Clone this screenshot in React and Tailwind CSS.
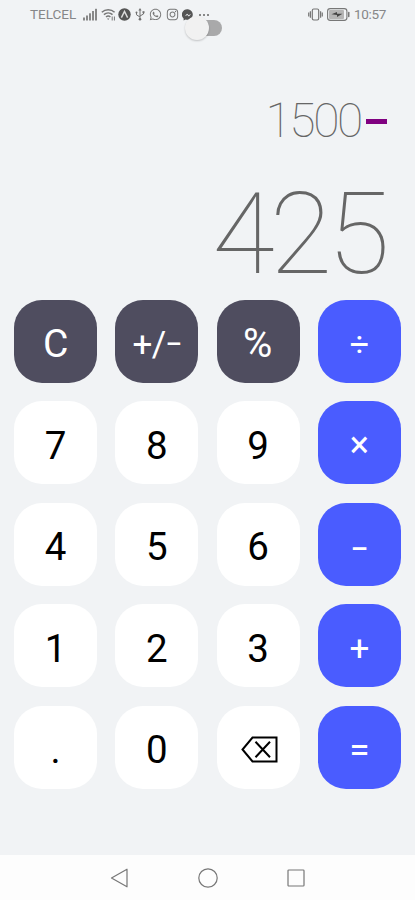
import React from "react";
import { FaWhatsapp, FaInstagram } from "react-icons/fa";

const keys = [
  { label: "C", tone: "dark", text: "text-[39px]" },
  { label: "+/-", name: "sign", tone: "dark" },
  { label: "%", tone: "dark", text: "text-[40px] tracking-[1px]" },
  { label: "÷", tone: "blue", text: "text-[34px] pb-px" },
  { label: "7" },
  { label: "8" },
  { label: "9" },
  { label: "×", tone: "blue", text: "text-[36px] pb-px" },
  { label: "4" },
  { label: "5" },
  { label: "6" },
  { label: "–", tone: "blue", text: "text-[27px] font-medium pt-[5px]" },
  { label: "1" },
  { label: "2" },
  { label: "3" },
  { label: "+", tone: "blue", text: "text-[35px] pb-px" },
  { label: "." },
  { label: "0" },
  { label: "", name: "delete" },
  { label: "=", tone: "blue", text: "text-[37px] pb-px" },
];

const tones = {
  dark: "bg-[#4f4d5f] text-white",
  blue: "bg-[#4a5cff] text-white",
  white: "bg-white text-black",
};

const SignalIcon = () => (
  <svg width="15" height="13" viewBox="0 0 15 13" fill="#888">
    <rect x="0" y="9.5" width="2" height="3" />
    <rect x="3" y="7.5" width="2" height="5" />
    <rect x="6" y="5.3" width="2" height="7.2" />
    <rect x="9" y="3" width="2" height="9.5" />
    <rect x="12" y="0.8" width="2" height="11.7" />
  </svg>
);

const WifiIcon = () => (
  <svg width="15" height="13" viewBox="0 0 15 13" fill="none" stroke="#777" strokeWidth="1.5">
    <path d="M0.8 4.2C4.4 0.8 10 0.8 13.6 4.2" />
    <path d="M2.9 6.6C5.4 4.3 9 4.3 11.5 6.6" />
    <path d="M5 9C6.4 7.8 8 7.8 9.4 9" />
    <path d="M6 10.6L7.2 12L8.4 10.6Z" fill="#777" stroke="none" />
    <path d="M11.2 8.5V12.5M13.4 8.5V12.5" strokeWidth="1" />
  </svg>
);

const ArrowBadgeIcon = () => (
  <svg width="13" height="13" viewBox="0 0 13 13">
    <circle cx="6.5" cy="6.5" r="6.2" fill="#555" />
    <path d="M3.4 9.6L6.5 3.4L9.6 9.6" fill="none" stroke="#ddd" strokeWidth="1.4" />
    <path d="M6.5 6.5V10" stroke="#555" strokeWidth="1.2" />
  </svg>
);

const UsbIcon = () => (
  <svg width="10" height="13" viewBox="0 0 10 13" fill="none" stroke="#707070" strokeWidth="1">
    <path d="M5 2V11M1.5 4.8V6.8L5 9M8.5 4V6L5 8" />
    <path d="M3.4 2.6L5 0L6.6 2.6Z" fill="#707070" stroke="none" />
    <circle cx="5" cy="11.3" r="1.3" fill="#707070" stroke="none" />
    <circle cx="1.5" cy="4.6" r="1" fill="#707070" stroke="none" />
    <rect x="7.5" y="3.2" width="2" height="2" fill="#707070" stroke="none" />
  </svg>
);

const MessengerIcon = () => (
  <svg width="12" height="12" viewBox="0 0 12 12">
    <path d="M6 0.3A5.5 5.3 0 1 1 3.6 10.6L1.6 11.6V9.4A5.5 5.3 0 0 1 6 0.3Z" fill="#555" />
    <path d="M2.8 7.2L5.1 4.8L6.7 6.2L9.2 4.8L6.9 7.4L5.3 6Z" fill="#f1f3f5" />
  </svg>
);

const VibrateIcon = () => (
  <svg width="15" height="13" viewBox="0 0 15 13" fill="none" stroke="#777" strokeWidth="1.2">
    <rect x="4.3" y="1" width="6.4" height="11" rx="1.4" />
    <path d="M2.4 3.2V9.8M0.7 4.5V8.5M12.6 3.2V9.8M14.3 4.5V8.5" />
  </svg>
);

const BatteryIcon = () => (
  <svg width="23" height="13" viewBox="0 0 23 13">
    <rect x="0.6" y="0.6" width="19.3" height="11.8" rx="2.6" fill="#f1f3f5" stroke="#777" strokeWidth="1.1" />
    <rect x="2" y="2" width="15" height="9" rx="1" fill="#b5b5b5" />
    <path d="M4.5 6.3L10 3.9V5.7H15.5L10 9.1V7.1Z" fill="#444" />
    <rect x="21" y="3.7" width="1.5" height="5.6" rx="0.7" fill="#777" />
  </svg>
);

const DeleteIcon = () => (
  <svg className="-mt-[2px] ml-[2px]" width="37" height="27" viewBox="0 0 37 27" fill="none" stroke="#000" strokeWidth="2">
    <path d="M11.5 1.5H35.5V25.5H11.5L1.5 13.5Z" />
    <path d="M14.5 5.8L29 21.2M29 5.8L14.5 21.2" />
  </svg>
);

const KeyContent = ({ item }) => {
  if (item.name === "delete") return <DeleteIcon />;
  if (item.name === "sign") {
    return (
      <span className="flex items-center text-[35px] leading-none tracking-[-0.5px]">
        <span>+/</span>
        <span className="text-[25px] font-medium">–</span>
      </span>
    );
  }
  return <span className={`leading-none ${item.text || "text-[38.5px]"}`}>{item.label}</span>;
};

const Toggle = () => (
  <div className="absolute left-[185px] top-[16px] w-[38px] h-6 flex items-center">
    <div className="w-8 h-4 ml-[5px] rounded-full bg-[#a9a9aa]" />
    <div className="absolute left-0 top-0 w-6 h-6 rounded-full bg-[#f1f1f1] shadow-[0_1px_2px_rgba(0,0,0,0.2)]" />
  </div>
);

const App = () => {
  return (
    <div className="relative w-[415px] h-[900px] flex flex-col overflow-hidden bg-[#f1f3f5] font-['Roboto',sans-serif]">
      {/* Status bar */}
      <div className="h-[29px] shrink-0 flex items-center pl-[30px] pr-[29px] text-[#868688]">
        <span className="w-[53px] text-[13.5px] leading-[29px]">TELCEL</span>
        <span className="w-[18px]"><SignalIcon /></span>
        <span className="w-[17px]"><WifiIcon /></span>
        <span className="w-[17px]"><ArrowBadgeIcon /></span>
        <span className="w-[14px]"><UsbIcon /></span>
        <span className="w-[17px]"><FaWhatsapp size={13} color="#777" /></span>
        <span className="w-[16px]"><FaInstagram size={13} color="#777" /></span>
        <span className="w-[17px]"><MessengerIcon /></span>
        <span className="flex gap-[2px]">
          <span className="w-[2px] h-[2px] bg-[#888]" />
          <span className="w-[2px] h-[2px] bg-[#888]" />
          <span className="w-[2px] h-[2px] bg-[#888]" />
        </span>
        <span className="ml-auto mr-[4px]"><VibrateIcon /></span>
        <span className="mr-[4px]"><BatteryIcon /></span>
        <span className="text-[13.5px] tracking-[-0.3px]">10:57</span>
      </div>
      <Toggle />

      {/* Display */}
      <div className="h-[271px] shrink-0 flex flex-col items-end pr-[28px]">
        <div className="mt-[68px] h-12 flex items-center">
          <span className="text-[48px] leading-[48px] font-thin tracking-[-2.4px] text-[#666]">1500</span>
          <span className="ml-[5px] w-[21px] h-[5px] bg-[#800080]" />
        </div>
        <span className="mt-[29px] mr-[2px] text-[114px] leading-[120px] font-thin tracking-[-4.8px] text-[#666]">425</span>
      </div>

      {/* Keypad */}
      <div className="grid grid-cols-4 gap-x-[18.4px] gap-y-[18.7px] px-[14.2px] shrink-0">
        {keys.map((item, index) => (
          <button
            key={index}
            className={`h-[82.8px] rounded-[28px] flex items-center justify-center pt-[6px] ${tones[item.tone || "white"]}`}
          >
            <KeyContent item={item} />
          </button>
        ))}
      </div>

      {/* Navigation bar */}
      <div className="mt-auto h-[45px] shrink-0 flex items-center justify-center bg-[#fdfdfd]">
        <svg className="mr-[69px]" width="19" height="20" viewBox="0 0 19 20" fill="none" stroke="#777" strokeWidth="1.2">
          <path d="M17 1.2V18.8L1.5 10Z" strokeLinejoin="round" />
        </svg>
        <svg width="20" height="20" viewBox="0 0 20 20" fill="none" stroke="#777" strokeWidth="1.2">
          <circle cx="10" cy="10" r="9.2" />
        </svg>
        <svg className="ml-[69px]" width="18" height="18" viewBox="0 0 18 18" fill="none" stroke="#777" strokeWidth="1.2">
          <rect x="1" y="1" width="16" height="16" rx="0.8" />
        </svg>
      </div>
    </div>
  );
};

export default App;
